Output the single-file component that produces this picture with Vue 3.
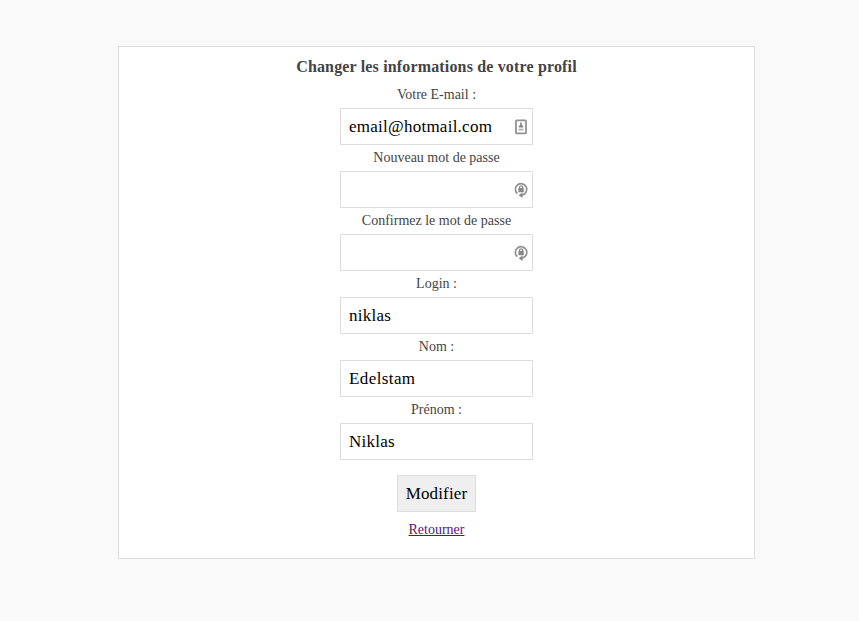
<script setup>
import { ref } from 'vue'

const fields = ref([
  { id: 'email', label: 'Votre E-mail :', type: 'text', value: 'email@hotmail.com', icon: 'card' },
  { id: 'password', label: 'Nouveau mot de passe', type: 'password', value: '', icon: 'lock' },
  { id: 'confirm', label: 'Confirmez le mot de passe', type: 'password', value: '', icon: 'lock' },
  { id: 'login', label: 'Login :', type: 'text', value: 'niklas' },
  { id: 'nom', label: 'Nom :', type: 'text', value: 'Edelstam' },
  { id: 'prenom', label: 'Prénom :', type: 'text', value: 'Niklas' },
])
</script>

<template>
  <main class="page">
    <form class="card" @submit.prevent>
      <h1 class="title">Changer les informations de votre profil</h1>
      <div v-for="field in fields" :key="field.id" class="field">
        <label class="label" :for="field.id">{{ field.label }}</label>
        <div class="control">
          <input :id="field.id" v-model="field.value" class="input" :class="field.id" :type="field.type" />
          <svg v-if="field.icon === 'card'" class="icon" viewBox="0 0 16 18">
            <rect x="3" y="2.4" width="10" height="13" rx=".6" fill="#fff" stroke="#929292" stroke-width="1.8" />
            <path d="M7.2 4.6h1.6v2.1l1.4 1.5v1.4H5.8V8.2l1.4-1.5z" fill="#858585" />
            <path d="M5.6 11.6h4.8" stroke="#b0b0b0" stroke-width="1.8" />
          </svg>
          <svg v-else-if="field.icon === 'lock'" class="icon" viewBox="0 0 16 18">
            <path d="M4.3 12.6A5.7 5.7 0 1 1 9.4 13.9" fill="none" stroke="#929292" stroke-width="1.7" />
            <path d="M9.6 11.5v5.6L5.6 14.3z" fill="#888" />
            <path d="M6.5 7.4V6.4a1.6 1.6 0 0 1 3.2 0V7.4" fill="none" stroke="#909090" stroke-width="1.3" />
            <rect x="5.4" y="7" width="5.4" height="4.2" rx=".4" fill="#888" />
          </svg>
        </div>
      </div>
      <button class="submit" type="submit">Modifier</button>
      <a class="back" href="#">Retourner</a>
    </form>
  </main>
</template>

<style>
body {
  background: #f9f9f9;
}
</style>

<style scoped>
.page {
  padding: 46px 104px 62px 118px;
  font-family: "Liberation Serif", serif;
  color: #444;
}
.card {
  box-sizing: border-box;
  width: 637px;
  height: 513px;
  padding-top: 8px;
  border: 1px solid #ddd;
  background: #fff;
  display: flex;
  flex-direction: column;
  align-items: center;
}
.title {
  margin: 0;
  height: 27px;
  line-height: 24px;
  font-size: 16px;
  letter-spacing: 0.16px;
  font-weight: bold;
  white-space: nowrap;
}
.field {
  width: 193px;
  display: flex;
  flex-direction: column;
  align-items: center;
}
.label {
  height: 26px;
  line-height: 25px;
  font-size: 14px;
  white-space: nowrap;
}
.control {
  position: relative;
  width: 193px;
  height: 37px;
}
.input,
.submit {
  box-sizing: border-box;
  display: block;
  height: 37px;
  margin: 0;
  border: 1px solid #ddd;
  border-radius: 0;
  font-family: "Liberation Serif", serif;
  font-size: 17px;
  letter-spacing: 0.25px;
  color: #000;
  outline: none;
}
.input {
  width: 193px;
  padding: 0 8px;
  background: #fff;
}
.nom {
  letter-spacing: 0.4px;
}
.icon {
  position: absolute;
  right: 4px;
  top: 10px;
  width: 16px;
  height: 18px;
}
.submit {
  width: 79px;
  flex-shrink: 0;
  margin-top: 15px;
  padding: 0;
  background: #efefef;
  letter-spacing: 0.15px;
}
.back {
  margin-top: 5px;
  line-height: 25px;
  font-size: 14px;
  color: #5c0f8c;
}
</style>
